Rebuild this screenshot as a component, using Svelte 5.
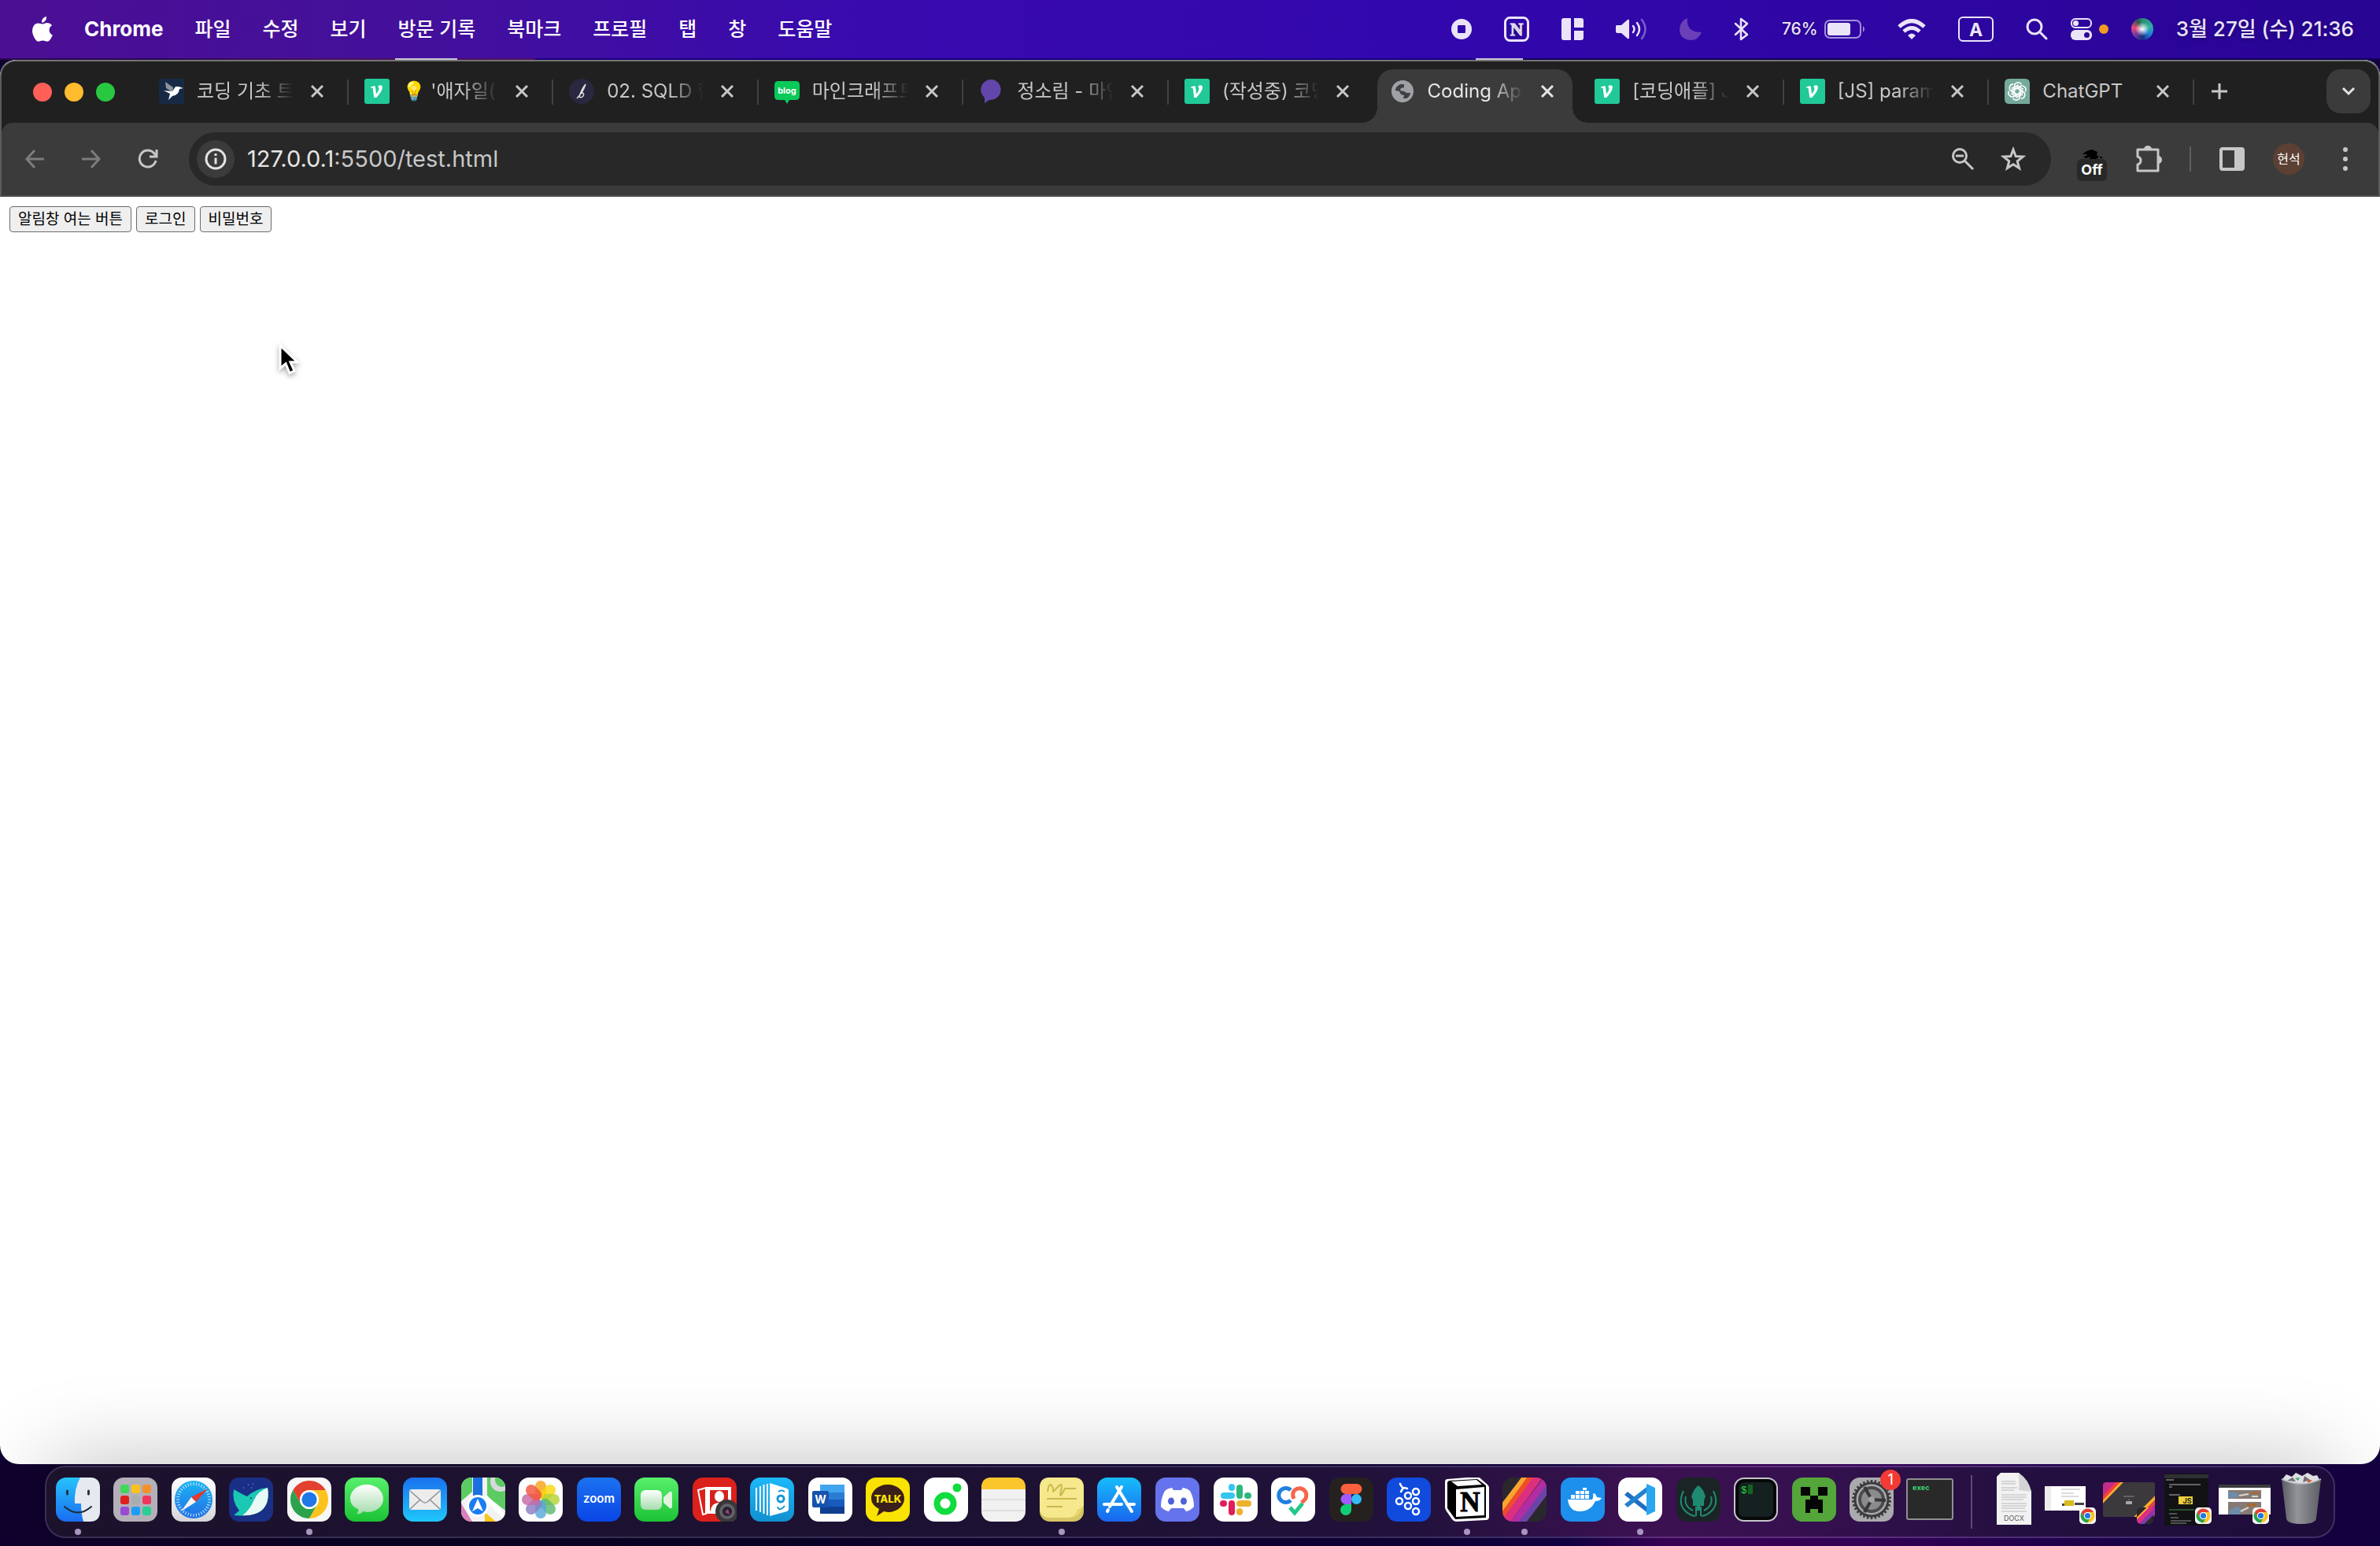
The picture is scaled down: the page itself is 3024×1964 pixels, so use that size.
<script lang="ts">
  interface Tab {
    title: string;
    icon: string;
    active?: boolean;
    divider?: boolean;
    short?: boolean;
  }

  const menus = ['파일', '수정', '보기', '방문 기록', '북마크', '프로필', '탭', '창', '도움말'];

  const tabs: Tab[] = [
    { title: '코딩 기초 트', icon: 'bird', divider: true },
    { title: "💡 '애자일(", icon: 'velog', divider: true },
    { title: '02. SQLD 합', icon: 'script', divider: true },
    { title: '마인크래프트', icon: 'blog', divider: true },
    { title: '정소림 - 마인', icon: 'bubble', divider: true },
    { title: '(작성중) 코딩', icon: 'velog' },
    { title: 'Coding Ap', icon: 'globe', active: true },
    { title: '[코딩애플] J', icon: 'velog', divider: true },
    { title: '[JS] param', icon: 'velog', divider: true },
    { title: 'ChatGPT', icon: 'gpt', divider: true, short: true },
  ];

  const apps = [
    'Finder', 'Launchpad', 'Safari', 'Whale', 'Chrome', 'Messages', 'Mail', 'Maps', 'Photos', 'Zoom',
    'FaceTime', 'Photo Booth', 'Books', 'Word', 'KakaoTalk', 'Melon', 'Notes', 'Stickies', 'App Store',
    'Discord', 'Slack', 'Care', 'Figma', 'Grape', 'Notion', 'Stripes', 'Docker', 'Code', 'GitKraken',
    'Terminal', 'Minecraft', 'Settings', 'exec',
  ];
  const running = ['Finder', 'Chrome', 'Stickies', 'Notion', 'Stripes', 'Code'];
  const files = ['Document', 'Window 1', 'Window 2', 'Window 3', 'Window 4', 'Trash'];

  const petals = ['#f6a21b', '#f9d80f', '#b5d334', '#5bb974', '#5aa7d8', '#8a7cc2', '#c66aa6', '#f2553d'];
  const padColors = ['#3fd858', '#fbc21d', '#f5912b', '#e0201c', '#a8abb0', '#f0365c', '#9a4bd2', '#1f9df5', '#27cf93'];
  const ticks = Array.from({ length: 36 }, (_, i) => i * 10);
  const teeth = Array.from({ length: 30 }, (_, i) => i * 12);
</script>

{#snippet chromeBall()}
  <svg viewBox="0 0 56 56" width="56" height="56">
    <rect width="56" height="56" rx="13" fill="#f7f7f7" />
    <g transform="translate(28 28) scale(1.2) translate(-24 -24)">
      <path d="M24 14H41.3A20 20 0 0 0 6.7 14L15.34 29A10 10 0 0 1 24 14z" fill="#e3402f" />
      <path d="M6.7 14A20 20 0 0 0 24 44L32.66 29A10 10 0 0 1 15.34 29z" fill="#2ba24b" />
      <path d="M24 44A20 20 0 0 0 41.3 14H24A10 10 0 0 1 32.66 29z" fill="#fcc31e" />
      <circle cx="24" cy="24" r="10" fill="#fff" />
      <circle cx="24" cy="24" r="8" fill="#1f77e8" />
    </g>
  </svg>
{/snippet}

{#snippet favicon(name: string)}
  {#if name === 'velog'}
    <svg viewBox="0 0 32 32" width="32" height="32">
      <rect width="32" height="32" rx="3" fill="#20c997" />
      <path d="M8 10.500l5-1.500q1 .5 1.300 4l.6 6.500q3.800-4.500 3.500-7.500-.3-1.500-1.300-1.800.5-2 3-2 2.800 0 2.800 2.800 0 4.500-7.600 13h-3.100L10.700 12.500q-.3-1-1-1H8z" fill="#fff" />
    </svg>
  {:else if name === 'bird'}
    <svg viewBox="0 0 32 32" width="32" height="32">
      <rect width="32" height="32" rx="4" fill="#172a45" />
      <path d="M8 4l10 7-1 6-8-5z" fill="#8d949e" />
      <path d="M6 15l11 1 4-6h4l6 2-5 1q-1 8-9 9l-5 5 2-8z" fill="#fff" />
    </svg>
  {:else if name === 'script'}
    <svg viewBox="0 0 32 32" width="32" height="32">
      <circle cx="16" cy="16" r="16" fill="#2a2740" />
      <path d="M10 25q8-8 11-18-5 6-8 16 2 2 5-1 2-4-2-4" fill="none" stroke="#ddd" stroke-width="1.500" />
    </svg>
  {:else if name === 'blog'}
    <svg viewBox="0 0 32 32" width="32" height="32">
      <path d="M5 3h22q5 0 5 5v14q0 5-5 5h-8l-3 5-3-5H5q-5 0-5-5V8q0-5 5-5z" fill="#09c958" />
      <text x="16" y="19" font-family="Inter, sans-serif" font-weight="700" font-size="11" text-anchor="middle" fill="#fff">blog</text>
    </svg>
  {:else if name === 'bubble'}
    <svg viewBox="0 0 32 32" width="32" height="32">
      <path d="M16 1a13 13 0 1 1-3 26l-6 4v-7A13 13 0 0 1 16 1z" fill="#6246ac" />
    </svg>
  {:else if name === 'globe'}
    <svg viewBox="0 0 32 32" width="32" height="32">
      <circle cx="16" cy="16" r="14" fill="#9ea0a5" />
      <path d="M13 7h6l-1 4-4 1-1 3 5 1 3 2h5q0 5-4 7h-5l1-4-4-1-2-4-5-1q0-5 6-8z" fill="#3c4043" />
      <path d="M18 7q4 0 7 4-1 4-5 3l-2-3z" fill="#9ea0a5" />
      <circle cx="16" cy="16" r="12" fill="none" stroke="#9ea0a5" stroke-width="3" />
    </svg>
  {:else}
    <svg viewBox="0 0 32 32" width="32" height="32">
      <path d="M6 0h20q6 0 6 6v26H6q-6 0-6-6V6q0-6 6-6z" fill="#75a99c" />
      <g fill="none" stroke="#fff" stroke-width="1.600" stroke-linejoin="round">
        {#each [0, 60, 120, 180, 240, 300] as turn}
          <path transform="rotate({turn} 16 16)" d="M12.500 18V9.500a4.800 4.800 0 0 1 9-2.200M12.500 13.500l5.500-3.500 6 3.400" />
        {/each}
      </g>
    </svg>
  {/if}
{/snippet}

{#snippet appArt(name: string)}
  {#if name === 'Finder'}
    <svg viewBox="0 0 56 56" width="56" height="56">
      <rect width="56" height="56" rx="13" fill="url(#g-finder)" />
      <path d="M31 0h12q13 0 13 13v30q0 13-13 13h-8q-3-10-3-23h-8Q23 14 31 0z" fill="#e6e9ef" />
      <path d="M14.500 17v4M41.500 17v4" stroke="#26333f" stroke-width="3" stroke-linecap="round" />
      <path d="M11 37q17 15 34 0" fill="none" stroke="#1c2b3b" stroke-width="2" stroke-linecap="round" />
    </svg>
  {:else if name === 'Launchpad'}
    <svg viewBox="0 0 56 56" width="56" height="56">
      <rect width="56" height="56" rx="13" fill="#b3b0ba" />
      {#each padColors as color, i}
        <rect x={9 + (i % 3) * 14} y={9 + Math.floor(i / 3) * 14} width="11" height="11" rx="3" fill={color} />
      {/each}
    </svg>
  {:else if name === 'Safari'}
    <svg viewBox="0 0 56 56" width="56" height="56">
      <rect width="56" height="56" rx="13" fill="url(#g-white)" />
      <circle cx="28" cy="28" r="24" fill="url(#g-blue)" />
      {#each ticks as turn}
        <path transform="rotate({turn} 28 28)" d="M28 6v4" stroke="#cfe9ff" />
      {/each}
      <path d="M46 14L31 31l-6-6z" fill="#e8372c" />
      <path d="M12 43l13-18 6 6z" fill="#f3f3f3" />
    </svg>
  {:else if name === 'Whale'}
    <svg viewBox="0 0 56 56" width="56" height="56">
      <rect width="56" height="56" rx="13" fill="#1a2f86" />
      <path d="M6 15q10 6 17 9Q34 14 49 13q4 20-9 30-12 7-34 5l7-6Q3 30 6 15z" fill="#1ac8b4" />
      <path d="M49 13q3 20-8 29-9 7-24 6Q26 42 32 28q5-11 17-15z" fill="#e9faf6" />
      <circle cx="28" cy="26" r="1" fill="#123" />
      <path d="M18 13h1M24 9h1M30 8h1M28 13h1" stroke="#8db4ff" />
    </svg>
  {:else if name === 'Chrome'}
    {@render chromeBall()}
  {:else if name === 'Messages'}
    <svg viewBox="0 0 56 56" width="56" height="56">
      <rect width="56" height="56" rx="13" fill="url(#g-green)" />
      <path d="M28 9c12 0 21 8 21 18s-9 17-21 17l-5-1q-3 4-8 3 3-2 2-6Q7 36 7 27C7 17 16 9 28 9z" fill="url(#g-mint)" />
    </svg>
  {:else if name === 'Mail'}
    <svg viewBox="0 0 56 56" width="56" height="56">
      <rect width="56" height="56" rx="13" fill="url(#g-mail)" />
      <rect x="8" y="15" width="40" height="26" rx="3" fill="#ececec" />
      <path d="M9 17l16 14q3 2 6 0l16-14M9 40l13-12M47 40L34 28" fill="none" stroke="#8b8f94" stroke-width="1.500" />
    </svg>
  {:else if name === 'Maps'}
    <svg viewBox="0 0 56 56" width="56" height="56">
      <g clip-path="url(#tile)">
        <rect width="56" height="56" fill="#f2f2f2" />
        <path d="M0 0h14v18L0 30zM33 0h23v42L33 24z" fill="#5ccb61" />
        <path d="M0 33l14 23H0z" fill="#dc80bb" />
        <path d="M30 56V44l14 12z" fill="#fbc51b" />
        <circle cx="50" cy="5" r="13" fill="#d8d8dc" />
        <circle cx="52" cy="3" r="9" fill="#5ccb61" />
        <path d="M15 0h12v30H15z" fill="#1d6fe0" />
        <path d="M30 24l26 27" stroke="#fff" stroke-width="6" />
        <circle cx="21" cy="36" r="14" fill="#fff" />
        <circle cx="21" cy="36" r="11" fill="#1a7cf2" />
        <path d="M21 27l7 16-7-4-7 4z" fill="#fff" />
      </g>
    </svg>
  {:else if name === 'Photos'}
    <svg viewBox="0 0 56 56" width="56" height="56">
      <rect width="56" height="56" rx="13" fill="#fdfdfd" />
      {#each petals as color, i}
        <rect x="21" y="4" width="14" height="23" rx="7" fill={color} opacity="0.820" transform="rotate({i * 45} 28 28)" />
      {/each}
    </svg>
  {:else if name === 'Zoom'}
    <svg viewBox="0 0 56 56" width="56" height="56">
      <rect width="56" height="56" rx="13" fill="url(#g-zoom)" />
      <text x="28" y="32" font-family="Inter, sans-serif" font-weight="600" font-size="15" text-anchor="middle" fill="#fff">zoom</text>
    </svg>
  {:else if name === 'FaceTime'}
    <svg viewBox="0 0 56 56" width="56" height="56">
      <rect width="56" height="56" rx="13" fill="url(#g-green)" />
      <rect x="8" y="16" width="27" height="25" rx="6" fill="url(#g-mint)" />
      <path d="M37 25l8-7q3-1 3 2v17q0 3-3 2l-8-7z" fill="#dff3df" />
    </svg>
  {:else if name === 'Photo Booth'}
    <svg viewBox="0 0 56 56" width="56" height="56">
      <rect width="56" height="56" rx="13" fill="#dc201c" />
      <path d="M7 16l10-3v33l-4 1z" fill="none" stroke="#fff" stroke-width="2" />
      <path d="M18 12h31v34H18z" fill="#fff" />
      <path d="M22 16h23v26H22z" fill="#d6221e" />
      <ellipse cx="34" cy="24" rx="6" ry="7" fill="#fff" />
      <path d="M23 42q1-10 11-10t11 10z" fill="#fff" />
      <circle cx="44" cy="43" r="15" fill="#38383b" />
      <circle cx="44" cy="43" r="10" fill="#606066" />
      <circle cx="44" cy="43" r="6" fill="#25222d" />
      <path d="M41 44l4-4 2 7z" fill="#a2417e" />
    </svg>
  {:else if name === 'Books'}
    <svg viewBox="0 0 56 56" width="56" height="56">
      <rect width="56" height="56" rx="13" fill="url(#g-sky)" />
      <path d="M25 7l22 7q2 1 2 3v23q0 2-2 3l-22 6z" fill="#fff" />
      <path d="M8 13v29M13 11v33M17.500 9v37M22 8v40" stroke="#fff" stroke-width="2" />
      <circle cx="39" cy="27" r="4" fill="none" stroke="#1597d8" stroke-width="3" />
      <path d="M36 18q4-3 8 0M35 37q1 4 4 3t5-4" fill="none" stroke="#1597d8" stroke-width="2" />
    </svg>
  {:else if name === 'Word'}
    <svg viewBox="0 0 56 56" width="56" height="56">
      <rect width="56" height="56" rx="13" fill="#fff" />
      <path d="M15 9h31v10H15z" fill="#41a5ee" />
      <path d="M15 19h31v9H15z" fill="#2b7cd3" />
      <path d="M15 28h31v9H15z" fill="#185abd" />
      <path d="M15 37h31v9H15z" fill="#103f91" />
      <rect x="5" y="17" width="21" height="21" rx="2" fill="#1553ad" />
      <text x="15.500" y="33" font-family="Inter, sans-serif" font-weight="700" font-size="14" text-anchor="middle" fill="#fff">W</text>
    </svg>
  {:else if name === 'KakaoTalk'}
    <svg viewBox="0 0 56 56" width="56" height="56">
      <rect width="56" height="56" rx="13" fill="#fae300" />
      <path d="M28 9c12 0 21 8 21 17.500S40 44 28 44l-5-1-9 6 3-9Q7 35 7 26.500C7 17 16 9 28 9z" fill="#3b1f1b" />
      <text x="28" y="32" font-family="Inter, sans-serif" font-weight="800" font-size="13" text-anchor="middle" fill="#ffe500">TALK</text>
    </svg>
  {:else if name === 'Melon'}
    <svg viewBox="0 0 56 56" width="56" height="56">
      <rect width="56" height="56" rx="14" fill="#fff" />
      <circle cx="27" cy="33" r="10.500" fill="none" stroke="#10dc3d" stroke-width="8" />
      <circle cx="42" cy="13" r="5.500" fill="#10dc3d" />
    </svg>
  {:else if name === 'Notes'}
    <svg viewBox="0 0 56 56" width="56" height="56">
      <rect width="56" height="56" rx="13" fill="#f1f1f1" />
      <path d="M13 0h30q13 0 13 13v2H0v-2Q0 0 13 0z" fill="#fbc52c" />
      <path d="M0 28h56M0 42h56" stroke="#cfcfcf" />
    </svg>
  {:else if name === 'Stickies'}
    <svg viewBox="0 0 56 56" width="56" height="56">
      <rect width="56" height="56" rx="13" fill="#d6c664" />
      <path d="M13 0h30q13 0 13 13v22Q50 50 38 51H13Q0 51 0 38V13Q0 0 13 0z" fill="#f6e88c" />
      <path d="M10 18q2-12 5-8t2 7 6-5 4 5 5-3h14M9 27h38M9 37h20" fill="none" stroke="#cbb84e" stroke-width="2" />
      <path d="M56 35q-7 14-18 16 9-3 10-10 4-1 8-6z" fill="#e2cf66" />
    </svg>
  {:else if name === 'App Store'}
    <svg viewBox="0 0 56 56" width="56" height="56">
      <rect width="56" height="56" rx="13" fill="url(#g-store)" />
      <path d="M31 12L16 37M25 12l19 31M9 34h22M38 34h9M14 41l-1 2" stroke="#fff" stroke-width="4" stroke-linecap="round" />
    </svg>
  {:else if name === 'Discord'}
    <svg viewBox="0 0 56 56" width="56" height="56">
      <rect width="56" height="56" rx="13" fill="#6573ec" />
      <path d="M21 13l2 3h10l2-3q6 1 9 4 5 9 5 20-4 5-10 6l-3-4H20l-3 4q-6-1-10-6 0-11 5-20 3-3 9-4z" fill="#fff" />
      <ellipse cx="20" cy="30" rx="4" ry="4.500" fill="#5060d8" />
      <ellipse cx="36" cy="30" rx="4" ry="4.500" fill="#5060d8" />
    </svg>
  {:else if name === 'Slack'}
    <svg viewBox="0 0 56 56" width="56" height="56">
      <rect width="56" height="56" rx="13" fill="#fff" />
      <g stroke-width="8" stroke-linecap="round">
        <path d="M13 23h10M23 12v1" stroke="#36c5f0" />
        <path d="M33 13v10M43 23h1" stroke="#2eb67d" />
        <path d="M33 33h11M33 43v1" stroke="#ecb22e" />
        <path d="M23 33v11M13 33h-1" stroke="#e01e5a" />
      </g>
    </svg>
  {:else if name === 'Care'}
    <svg viewBox="0 0 56 56" width="56" height="56">
      <rect width="56" height="56" rx="13" fill="#fff" />
      <g fill="none" stroke-width="5">
        <path d="M25 16a9 9 0 1 0 0 13" stroke="#2180e0" />
        <path d="M29 27q-3-7 1-11a8.500 8.500 0 1 1 12 13l-3 3" stroke="#f7654a" />
        <path d="M24 38l6 7 10-12" stroke="#24c78a" />
      </g>
    </svg>
  {:else if name === 'Figma'}
    <svg viewBox="0 0 56 56" width="56" height="56">
      <rect width="56" height="56" rx="13" fill="#24211f" />
      <path d="M28 8h-7a6.500 6.500 0 0 0 0 13h7zM28 8h7a6.500 6.500 0 0 1 0 13h-7z" fill="#f9603d" />
      <path d="M28 21h-7a6.500 6.500 0 0 0 0 13h7z" fill="#a259ff" />
      <circle cx="34.500" cy="27.500" r="6.500" fill="#35bdf8" />
      <path d="M28 34h-7a7 7 0 1 0 7 7z" fill="#0fcf74" />
    </svg>
  {:else if name === 'Grape'}
    <svg viewBox="0 0 56 56" width="56" height="56">
      <rect width="56" height="56" rx="13" fill="#104bdd" />
      <g fill="none" stroke="#fff" stroke-width="2.500">
        <circle cx="37" cy="18" r="4" /><circle cx="27" cy="23" r="4" />
        <circle cx="16" cy="30" r="4" /><circle cx="37" cy="30" r="4" />
        <circle cx="27" cy="36" r="4" /><circle cx="37" cy="43" r="4" />
        <path d="M17 8q2 5 4 5t5 1M21 13l-3 5" stroke-linecap="round" />
      </g>
    </svg>
  {:else if name === 'Notion'}
    <svg viewBox="0 0 56 56" width="56" height="56">
      <path d="M3 2l37-3q3 0 6 3l8 7q2 2 2 4v37q0 4-4 4l-38 2q-3 0-5-3L2 43q-2-3-2-5V6q0-4 3-4z" fill="#fff" />
      <path d="M5 4l36-2 11 8v41l-39 2L3 39V6z" fill="#000" />
      <path d="M14 15l36-3v36l-36 2zM8 5l32-2 7 6-31 2z" fill="#fff" />
      <text x="32" y="43" font-family="Liberation Serif, serif" font-weight="700" font-size="35" text-anchor="middle" fill="#000" stroke="#000">N</text>
    </svg>
  {:else if name === 'Stripes'}
    <svg viewBox="0 0 56 56" width="56" height="56">
      <g clip-path="url(#tile)">
        <rect width="56" height="56" fill="#2b282d" />
        <path d="M-14 56L30-2" stroke="#f9a52f" stroke-width="7" />
        <path d="M-8 60L37-2" stroke="#ef4c2a" stroke-width="7" />
        <path d="M-2 64L48-4" stroke="#dc2f80" stroke-width="10" />
        <path d="M7 68L60-2" stroke="#b42ca4" stroke-width="10" />
        <path d="M16 69L66 3" stroke="#6c44a8" stroke-width="8" />
      </g>
    </svg>
  {:else if name === 'Docker'}
    <svg viewBox="0 0 56 56" width="56" height="56">
      <rect width="56" height="56" rx="13" fill="#1d90ee" />
      <path d="M9 28h31q2-3 1-8l3 1 2 4 6 1q-2 4-8 4Q38 43 24 43 11 43 9 28z" fill="#fff" />
      <path d="M13 22h5v5h-5zM19 22h5v5h-5zM25 22h5v5h-5zM31 22h5v5h-5zM19 17h5v4h-5zM25 17h5v4h-5zM28 13h5v3h-5zM31 17h5v4h-5z" fill="#fff" />
    </svg>
  {:else if name === 'Code'}
    <svg viewBox="0 0 56 56" width="56" height="56">
      <rect width="56" height="56" rx="13" fill="#fff" />
      <path d="M8 22l4-4 28 22v7z" fill="#1f6fc0" />
      <path d="M8 34l4 4 28-22V9z" fill="#2382cf" />
      <path d="M36 8l11 5v30l-11 5z" fill="#2ba5ef" />
    </svg>
  {:else if name === 'GitKraken'}
    <svg viewBox="0 0 56 56" width="56" height="56">
      <rect width="56" height="56" rx="13" fill="#1b2424" />
      <path d="M28 10q6 4 9 14l-2 5v7h-5v6h-4v-6h-5v-7l-2-5q3-10 9-14z" fill="#1f8a72" />
      <path d="M9 17Q2 32 10 41q6 7 14 8M47 17q7 15-1 24-6 7-14 8M12 24q-3 12 9 18M44 24q3 12-9 18M25 37v12M31 37v12" fill="none" stroke="#1f8a72" stroke-width="2" />
    </svg>
  {:else if name === 'Terminal'}
    <svg viewBox="0 0 56 56" width="56" height="56">
      <rect width="56" height="56" rx="13" fill="#c5c5cc" />
      <rect x="2" y="2" width="52" height="52" rx="11" fill="#060808" />
      <rect x="6" y="6" width="44" height="44" rx="7" fill="#152020" />
      <text x="9" y="20" font-family="Liberation Mono, monospace" font-size="13" fill="#27d645">$</text>
      <rect x="18" y="9" width="6" height="12" fill="#12651f" />
    </svg>
  {:else if name === 'Minecraft'}
    <svg viewBox="0 0 56 56" width="56" height="56">
      <rect width="56" height="56" rx="13" fill="#54a53a" />
      <path d="M11 12h12v11h10V12h12v11H33v5h6v17h-6v-5H23v5h-6V28h6v-5H11z" fill="#050505" />
    </svg>
  {:else if name === 'Settings'}
    <svg viewBox="0 0 56 56" width="56" height="56">
      <rect width="56" height="56" rx="13" fill="#aaaaae" />
      {#each teeth as turn}
        <path transform="rotate({turn} 28 28)" d="M28 3v5" stroke="#3b3b3d" stroke-width="2.500" />
      {/each}
      <circle cx="28" cy="28" r="21" fill="none" stroke="#3b3b3d" stroke-width="3" />
      <circle cx="28" cy="28" r="15" fill="#8b8b8f" stroke="#4a4a4c" stroke-width="4" />
      <path d="M28 28l18 1M28 28L19 12M28 28l-9 16" stroke="#37373a" stroke-width="4" />
      <circle cx="28" cy="28" r="4" fill="#a0a0a4" />
    </svg>
    <span class="badge">1</span>
  {:else}
    <svg viewBox="0 0 60 56" width="60" height="56">
      <rect x="1" y="2" width="58" height="51" rx="2" fill="#292929" stroke="#8e8e92" stroke-width="2" />
      <text x="8" y="16" font-family="Liberation Mono, monospace" font-weight="700" font-size="9" fill="#3be07a">exec</text>
    </svg>
  {/if}
{/snippet}

{#snippet fileArt(name: string)}
  {#if name === 'Document'}
    <svg viewBox="0 0 66 68" width="66" height="68">
      <path d="M17 1h23l16 23v43H12V6z" fill="#f2f2f2" />
      <path d="M40 1q1 14 0 22l16 2q-3-15-16-24z" fill="#d4d4d6" />
      <path d="M18 12h18M18 15h18M18 20h20M18 23h16M18 29h32M18 32h32M18 35h28M18 40h32M18 43h32M18 46h30M18 50h32" stroke="#b9b9bc" />
      <text x="34" y="62" font-family="Inter, sans-serif" font-size="9" text-anchor="middle" fill="#5e5e60">DOCX</text>
    </svg>
  {:else if name === 'Window 1'}
    <svg viewBox="0 0 66 68" width="66" height="68">
      <rect y="18" width="52" height="31" fill="#fff" />
      <path d="M0 18h8v31H0z" fill="#ececef" />
      <path d="M21 22h24M21 27h16M21 31h22" stroke="#b7b7bd" />
      <path d="M25 36h12v7H25z" fill="#d8ba20" />
      <path d="M22 40h3v3h-3zM38 39h12v3H38z" fill="#444" />
    </svg>
  {:else if name === 'Window 2'}
    <svg viewBox="0 0 66 68" width="66" height="68">
      <clipPath id="wide"><rect y="13" width="66" height="44" rx="2" /></clipPath>
      <g clip-path="url(#wide)">
        <rect y="13" width="66" height="44" fill="#3c393d" />
        <path d="M-8 34L17 9" stroke="#c52b8c" stroke-width="14" />
        <path d="M-5 42L26 10M38 61l32-32" stroke="#ffa92e" stroke-width="4" />
        <path d="M-5 38L22 10M44 61l30-30" stroke="#ef3f3c" stroke-width="4" />
        <path d="M50 64l24-24" stroke="#b42ca4" stroke-width="10" />
      </g>
      <path d="M26 31h14M32 35h2" stroke="#8d898f" />
      <rect x="29" y="37" width="8" height="4" rx="1" fill="#aaa7ac" />
    </svg>
  {:else if name === 'Window 3'}
    <svg viewBox="0 0 66 68" width="66" height="68">
      <rect x="5" y="2" width="56" height="66" fill="#121214" />
      <path d="M5 3h56v5H5z" fill="#2f3032" />
      <path d="M7 10h10M11 16h40M11 19h4M11 29h14" stroke="#b3b3b5" stroke-width="1" />
      <rect x="23" y="31" width="18" height="10" fill="#f0cf3a" />
      <text x="34" y="40" font-family="Inter, sans-serif" font-weight="700" font-size="9" text-anchor="middle" fill="#262626">JS</text>
      <path d="M11 48h32" stroke="#418c4b" />
      <path d="M11 53h10M13 58h10M13 62h26M13 65h20" stroke="#8f8f92" />
    </svg>
  {:else if name === 'Window 4'}
    <svg viewBox="0 0 66 68" width="66" height="68">
      <rect y="16" width="66" height="38" fill="#fff" />
      <path d="M0 16h66v4H0z" fill="#3c3c3e" />
      <path d="M12 23h42v11H12zM12 38h42v16H12z" fill="#857b74" />
      <path d="M12 25l10 1 6 4-8 3h-8zM14 48l10-4 8 5-7 5H14z" fill="#6f8daa" />
      <path d="M41 25h11v3H41zM36 40h12v4H36z" fill="#a66a3c" />
      <path d="M26 30l12-2M28 50l10-5M42 31h8" stroke="#ded6cc" stroke-width="2" />
    </svg>
  {:else}
    <svg viewBox="0 0 66 68" width="66" height="68">
      <path d="M8 9l5-6 7 3 5-5 8 4 7-4 7 4 5-1 4 7-5 6H13z" fill="#dedfe2" />
      <path d="M14 11l7-4 4 5zM36 5l7 5-9 3z" fill="#6c6e74" />
      <path d="M24 8l6-1-2 4z" fill="#3faa64" />
      <path d="M40 9l6 2-6 3z" fill="#c85b33" />
      <path d="M7 9q25 12 50 0l-6 50q-1 7-19 7t-19-7z" fill="url(#g-bin)" />
      <path d="M7 9q25 12 50 0" fill="none" stroke="#b9b9c0" stroke-width="1.500" />
    </svg>
  {/if}
  {#if name === 'Window 2'}
    <span class="mini stripes"></span>
  {:else if name.startsWith('Window')}
    <span class="mini">{@render chromeBall()}</span>
  {/if}
{/snippet}

<svg class="defs" width="0" height="0" aria-hidden="true">
  <defs>
    <clipPath id="tile"><rect width="56" height="56" rx="13" /></clipPath>
    <linearGradient id="g-finder" x2="0" y2="1"><stop stop-color="#26c3fb" /><stop offset="1" stop-color="#1a6df0" /></linearGradient>
    <linearGradient id="g-white" x2="0" y2="1"><stop stop-color="#fff" /><stop offset="1" stop-color="#d6d6d8" /></linearGradient>
    <linearGradient id="g-blue" x2="0" y2="1"><stop stop-color="#1db4f3" /><stop offset="1" stop-color="#2070e4" /></linearGradient>
    <linearGradient id="g-green" x2="0" y2="1"><stop stop-color="#57f06c" /><stop offset="1" stop-color="#1cc234" /></linearGradient>
    <linearGradient id="g-mint" x2="0" y2="1"><stop stop-color="#fff" /><stop offset="1" stop-color="#a5dcab" /></linearGradient>
    <linearGradient id="g-mail" x2="0" y2="1"><stop stop-color="#1a70ee" /><stop offset="1" stop-color="#1fc8fb" /></linearGradient>
    <linearGradient id="g-zoom" x2="0" y2="1"><stop stop-color="#1b72f0" /><stop offset="1" stop-color="#0a45e6" /></linearGradient>
    <linearGradient id="g-sky" x2="0" y2="1"><stop stop-color="#1cb8fb" /><stop offset="1" stop-color="#1290cf" /></linearGradient>
    <linearGradient id="g-store" x2="0" y2="1"><stop stop-color="#16bdfb" /><stop offset="1" stop-color="#1a66ee" /></linearGradient>
    <linearGradient id="g-bin" x2="1" y2="0"><stop stop-color="#5c5c63" /><stop offset="0.400" stop-color="#93939a" /><stop offset="1" stop-color="#5d5d64" /></linearGradient>
  </defs>
</svg>

<div class="desktop">
  <header class="menubar">
    <nav class="menus">
      <button class="apple" aria-label="Apple">
        <svg viewBox="0 0 26 32" width="26" height="32" fill="#fff">
          <path d="M18 0q.6 3.200-1.600 5.600T12 7.800q-.5-3 1.500-5.300T18 0z" />
          <path d="M13.300 9.500q1 0 3-.9t4.200-.3q3 .4 4.600 2.900-3.700 2.300-3.500 6.300t4.200 6q-1 3-3 5.700t-4 2.600q-1.200 0-2.700-.7t-2.900-.7q-1.300 0-2.700.7t-2.700.7Q5.600 32 3.300 28.300T.2 20.500q-.6-5 1.300-8.300T7 8.500q1.600 0 3.400.6t2.900.4z" />
        </svg>
      </button>
      <button class="app-name">Chrome</button>
      {#each menus as menu (menu)}
        <button>{menu}</button>
      {/each}
    </nav>
    <div class="status">
      <svg viewBox="0 0 26 26" width="26" height="26"><path d="M13 0a13 13 0 1 1 0 26 13 13 0 0 1 0-26zM9 8q-1 0-1 1v8q0 1 1 1h8q1 0 1-1V9q0-1-1-1z" fill="#ebe4f9" fill-rule="evenodd" /></svg>
      <svg viewBox="0 0 32 32" width="32" height="32">
        <rect x="1.500" y="1.500" width="29" height="29" rx="6" fill="none" stroke="#ebe4f9" stroke-width="3" />
        <text x="16" y="24" font-family="Liberation Serif, serif" font-weight="700" font-size="23" text-anchor="middle" fill="#ebe4f9" stroke="#ebe4f9">N</text>
      </svg>
      <svg viewBox="0 0 28 28" width="28" height="28" fill="#ebe4f9"><path d="M3 0h9v28H3q-3 0-3-3V3q0-3 3-3zM16 0h9q3 0 3 3v9H16zM16 16h12v9q0 3-3 3h-9z" /></svg>
      <svg viewBox="0 0 40 28" width="40" height="28" fill="none" stroke="#ebe4f9" stroke-width="2.500" stroke-linecap="round">
        <path d="M1 9h6l8-7q2-1 2 1v22q0 2-2 1l-8-7H2q-2 0-2-2v-6q0-2 1-2z" fill="#ebe4f9" stroke="none" />
        <path d="M22 10q3 4 0 8M27 6q6 8 0 16" />
        <path d="M33 2q9 12 0 24" opacity="0.400" />
      </svg>
      <svg viewBox="0 0 28 28" width="28" height="28"><path d="M10 0Q8 18 28 18 24 28 14 28 0 27 0 14 1 3 10 0z" fill="#6b3fb8" /></svg>
      <svg viewBox="0 0 20 30" width="20" height="30" fill="none" stroke="#ebe4f9" stroke-width="2.500" stroke-linejoin="round" stroke-linecap="round"><path d="M2 8l15 14-8 6V2l8 6L2 22" /></svg>
      <div class="battery">
        <span>76%</span>
        <svg viewBox="0 0 52 24" width="52" height="24">
          <rect x="1" y="1" width="45" height="22" rx="6" fill="none" stroke="#a58fdc" stroke-width="2" />
          <rect x="4" y="4" width="29" height="16" rx="3" fill="#ebe4f9" />
          <path d="M49 8q4 4 0 8z" fill="#a58fdc" />
        </svg>
      </div>
      <svg viewBox="0 0 36 26" width="36" height="26" fill="none" stroke="#ebe4f9" stroke-width="5">
        <path d="M2 10Q18-5 34 10M8 16q10-9 20 0" />
        <path d="M18 26l-5-5q5-5 10 0z" fill="#ebe4f9" stroke="none" />
      </svg>
      <svg viewBox="0 0 45 32" width="45" height="32">
        <rect x="1" y="1" width="43" height="30" rx="5" fill="none" stroke="#ebe4f9" stroke-width="2" />
        <text x="22.500" y="25" font-family="Inter, sans-serif" font-weight="700" font-size="23" text-anchor="middle" fill="#ebe4f9">A</text>
      </svg>
      <svg viewBox="0 0 28 28" width="28" height="28" fill="none" stroke="#ebe4f9" stroke-width="3" stroke-linecap="round"><circle cx="11" cy="11" r="9" /><path d="M18 18l8 8" /></svg>
    </div>
    <div class="status late">
      <svg viewBox="0 0 48 28" width="48" height="28">
        <rect x="1" y="1" width="25" height="11" rx="5" fill="none" stroke="#ebe4f9" stroke-width="2" />
        <circle cx="6.500" cy="6.500" r="3.500" fill="#ebe4f9" />
        <rect y="15" width="27" height="13" rx="6" fill="#ebe4f9" />
        <circle cx="20.500" cy="21.500" r="3.500" fill="#2b0596" />
        <circle cx="42" cy="14" r="6" fill="#f39b22" />
      </svg>
      <span class="siri"></span>
      <time>3월 27일 (수) 21:36</time>
    </div>
  </header>
  <div class="sliver"></div>

  <main class="window">
    <div class="chrome">
      <div class="strip">
        <div class="lights">
          <button class="light red" aria-label="닫기"></button>
          <button class="light yellow" aria-label="최소화"></button>
          <button class="light green" aria-label="확대"></button>
        </div>
        <div class="tabs">
          {#each tabs as tab}
            <div class="tab" class:active={tab.active} class:divider={tab.divider}>
              {@render favicon(tab.icon)}
              <button class="title" class:faded={!tab.short}>{tab.title}</button>
              <button class="close" aria-label="탭 닫기">
                <svg viewBox="0 0 16 16" width="16" height="16" fill="none" stroke="currentColor" stroke-width="3"><path d="M1 1l14 14M15 1L1 15" /></svg>
              </button>
            </div>
          {/each}
        </div>
        <button class="new-tab" aria-label="새 탭">
          <svg viewBox="0 0 20 20" width="20" height="20" fill="none" stroke="#c7c7c7" stroke-width="3"><path d="M10 0v20M0 10h20" /></svg>
        </button>
        <button class="tab-search" aria-label="탭 검색">
          <svg viewBox="0 0 18 12" width="18" height="12" fill="none" stroke="#e3e3e3" stroke-width="3"><path d="M2 2l7 7 7-7" /></svg>
        </button>
      </div>

      <div class="toolbar">
        <button class="tool dim" aria-label="뒤로">
          <svg viewBox="0 0 24 24" width="24" height="24" fill="none" stroke="currentColor" stroke-width="3"><path d="M24 12H2M12 1L2 12l10 11" /></svg>
        </button>
        <button class="tool dim" aria-label="앞으로">
          <svg viewBox="0 0 24 24" width="24" height="24" fill="none" stroke="currentColor" stroke-width="3"><path d="M0 12h22M12 1l10 11-10 11" /></svg>
        </button>
        <button class="tool" aria-label="새로고침">
          <svg viewBox="0 0 26 26" width="26" height="26" fill="none" stroke="currentColor" stroke-width="3"><path d="M23 15a10.500 10.500 0 1 1-2-9l3 3M24 1v9h-9" /></svg>
        </button>
        <div class="omnibox">
          <button class="site" aria-label="사이트 정보">
            <svg viewBox="0 0 28 28" width="28" height="28" fill="none" stroke="#e3e3e3" stroke-width="3"><circle cx="14" cy="14" r="12" /><path d="M14 12.500v8M14 7v3" /></svg>
          </button>
          <a class="url" href="http://127.0.0.1:5500/test.html"><b>127.0.0.1</b>:5500/test.html</a>
          <button class="inner" aria-label="확대/축소">
            <svg viewBox="0 0 30 30" width="30" height="30" fill="none" stroke="currentColor" stroke-width="3"><circle cx="11" cy="11" r="8.500" /><path d="M17 17l11 11M6 11h10" /></svg>
          </button>
          <button class="inner" aria-label="북마크 추가">
            <svg viewBox="0 0 32 32" width="32" height="32" fill="none" stroke="currentColor" stroke-width="3"><path d="M16 4l3.200 8.500 9 .6-7 5.700 2.400 8.800L16 22.700l-7.600 4.900 2.400-8.800-7-5.700 9-.6z" /></svg>
          </button>
        </div>
        <button class="tool off" aria-label="확장 프로그램">
          <svg viewBox="0 0 26 12" width="26" height="12"><path d="M1 6q5-5 12-6l7 3-1 4 3 2-3 3H9l3-3-6 2-4-1 6-4z" fill="#000" /><path d="M23 9h3v2h-3z" fill="#000" /></svg>
          <span>Off</span>
        </button>
        <button class="tool" aria-label="확장 프로그램 목록">
          <svg viewBox="0 0 36 38" width="36" height="38" fill="none" stroke="currentColor" stroke-width="3">
            <path d="M4 7h26v27H4v-8q4-1 4-5t-4-5z" stroke-linejoin="round" />
            <path d="M12 6q1-4 5-4t5 4zM31 15q4 1 4 5t-4 5z" fill="currentColor" stroke="none" />
          </svg>
        </button>
        <span class="rule"></span>
        <button class="tool" aria-label="측면 패널">
          <svg viewBox="0 0 32 30" width="32" height="30"><path d="M4 0h24q4 0 4 4v22q0 4-4 4H4q-4 0-4-4V4q0-4 4-4zM4 4v22h15V4z" fill="currentColor" fill-rule="evenodd" /></svg>
        </button>
        <button class="tool"><span class="avatar">현석</span></button>
        <button class="tool" aria-label="메뉴">
          <svg viewBox="0 0 6 32" width="6" height="32" fill="currentColor"><circle cx="3" cy="4" r="3" /><circle cx="3" cy="16" r="3" /><circle cx="3" cy="28" r="3" /></svg>
        </button>
      </div>
    </div>

    <section class="page">
      <button>알림창 여는 버튼</button>
      <button>로그인</button>
      <button>비밀번호</button>
      <svg class="cursor" viewBox="0 0 30 46" width="30" height="46">
        <path d="M3 4v29l7-6 5 12 6-3-5-11h9z" fill="#000" stroke="#fff" stroke-width="3" />
      </svg>
    </section>
  </main>

  <footer class="dock">
    {#each apps as app (app)}
      <button class="app" class:running={running.includes(app)} aria-label={app}>
        {@render appArt(app)}
      </button>
    {/each}
    <span class="dock-rule"></span>
    {#each files as file (file)}
      <button class="app file" aria-label={file}>
        {@render fileArt(file)}
      </button>
    {/each}
  </footer>
</div>

<style>
  :global(body) {
    background: #0b0224;
  }

  .defs {
    position: absolute;
  }

  svg {
    display: block;
    flex-shrink: 0;
  }

  button {
    display: flex;
    align-items: center;
    justify-content: center;
    padding: 0;
    border: 0;
    background: none;
    color: inherit;
    font: inherit;
    white-space: nowrap;
  }

  .desktop {
    display: flex;
    flex-direction: column;
    min-height: 100vh;
    background: linear-gradient(90deg, #10022e 0, #0a0224 20%, #10003c 60%, #14004a 66%, #3f0060 70%, #3a0062 78%, #1b0050 90%, #14003f 100%);
    font-family: Inter, "Noto Sans CJK KR", sans-serif;
  }

  .menubar {
    display: flex;
    align-items: center;
    height: 74px;
    padding: 0 33px 0 41px;
    background: linear-gradient(90deg, #4b0f93 0, #43109c 18%, #390aae 36%, #3208ae 60%, #2d059f 85%, #280592 100%);
    color: #fff;
    font-size: 25px;
    font-weight: 500;
    line-height: 32px;
    text-shadow: 0 2px 4px rgba(0, 0, 0, 0.3);
  }

  .menus {
    display: flex;
    align-items: center;
    gap: 40px;
    margin-right: auto;
  }

  .app-name {
    font-size: 26px;
    font-weight: 700;
  }

  .status {
    display: flex;
    align-items: center;
    gap: 41px;
    color: #ebe4f9;
  }

  .status.late {
    gap: 29px;
    margin-left: 29px;
    font-size: 26px;
  }

  .battery {
    display: flex;
    align-items: center;
    gap: 8px;
    font-size: 21px;
  }

  .siri {
    width: 28px;
    height: 28px;
    border-radius: 50%;
    background:
      radial-gradient(circle, #fff 0, rgba(255, 255, 255, 0) 45%),
      conic-gradient(#2a8d70, #2fae9e 20%, #1f7fd6 35%, #152d80 50%, #7c3aa0 65%, #ee4777 78%, #2a5a50 92%, #2a8d70);
  }

  .sliver {
    height: 2px;
    background: linear-gradient(90deg, #2a0a50 0 7%, #4a0f5e 14% 16.600%, #c9c9d6 16.600% 19.200%, #4e1060 19.200% 22.500%, #180080 22.500% 62%, #c9c9d6 62% 64%, #10005a 64%);
  }

  .window {
    display: flex;
    flex: 1;
    flex-direction: column;
    overflow: hidden;
    border-radius: 20px 20px 24px 24px;
    background: #fff;
  }

  .chrome {
    overflow: hidden;
    border: 2px solid #5c5c5e;
    border-top-color: #747476;
    border-bottom-color: #4c4c4c;
    border-radius: 20px 20px 0 0;
    background: #202020;
  }

  .strip {
    display: flex;
    height: 68px;
    padding: 10px 10px 0 40px;
  }

  .lights {
    display: flex;
    align-items: center;
    gap: 16px;
    height: 58px;
    margin-right: 40px;
  }

  .light {
    width: 24px;
    height: 24px;
    border-radius: 50%;
  }

  .red {
    background: #ff5f57;
  }

  .yellow {
    background: #febc2e;
  }

  .green {
    background: #28c840;
  }

  .tabs {
    display: flex;
    flex: 0 1 2606px;
    min-width: 0;
  }

  .tab {
    position: relative;
    display: flex;
    flex: 1 1 0;
    align-items: center;
    min-width: 0;
    height: 56px;
    padding: 0 30px 12px 16px;
    color: #c7c7c7;
    font-size: 24px;
    line-height: 32px;
  }

  .tab > :global(svg) {
    z-index: 1;
  }

  .title {
    z-index: 1;
    flex: 1;
    justify-content: flex-start;
    min-width: 0;
    margin: 0 16px;
    overflow: hidden;
  }

  .title.faded {
    mask-image: linear-gradient(90deg, #000 64%, transparent 100%);
  }

  .close {
    z-index: 1;
    width: 28px;
    height: 32px;
  }

  .tab.divider::after {
    position: absolute;
    top: 13px;
    right: 4px;
    width: 2px;
    height: 32px;
    background: #414141;
    content: '';
  }

  .tab.active {
    color: #e6e6e6;
  }

  .tab.active::before {
    position: absolute;
    inset: 0 12px 0 0;
    border-radius: 20px 20px 0 0;
    background: #3b3b3b;
    content: '';
  }

  .tab.active::after {
    position: absolute;
    right: -8px;
    bottom: 0;
    left: -20px;
    height: 20px;
    background:
      radial-gradient(circle at 0 0, transparent 20px, #3b3b3b 20px) 0 0 / 20px 20px no-repeat,
      radial-gradient(circle at 100% 0, transparent 20px, #3b3b3b 20px) 100% 0 / 20px 20px no-repeat;
    content: '';
  }

  .new-tab {
    width: 56px;
    height: 56px;
  }

  .tab-search {
    width: 56px;
    height: 56px;
    margin-left: auto;
    border-radius: 18px;
    background: #3b3b3b;
  }

  .toolbar {
    display: flex;
    align-items: center;
    gap: 16px;
    height: 92px;
    padding: 0 14px;
    border-radius: 14px 14px 0 0;
    background: #3b3b3b;
    color: #c7c7c7;
  }

  .tool {
    flex-shrink: 0;
    width: 56px;
    height: 56px;
  }

  .dim {
    color: #7c7c7c;
  }

  .omnibox {
    display: flex;
    flex: 1;
    align-items: center;
    gap: 16px;
    height: 68px;
    margin: 0 8px;
    padding: 0 24px 0 10px;
    border-radius: 34px;
    background: #282828;
    font-size: 29px;
    line-height: 36px;
  }

  .site,
  .inner {
    width: 48px;
    height: 48px;
  }

  .site {
    border-radius: 50%;
    background: #3b3b3b;
  }

  .url {
    flex: 1;
    color: #c7c7c7;
    text-decoration: none;
  }

  .url b {
    color: #e6e6e6;
    font-weight: 400;
  }

  .off {
    flex-direction: column;
    padding-top: 16px;
    color: #fff;
    font-size: 18px;
    font-weight: 700;
    line-height: 28px;
  }

  .off span {
    padding: 0 5px;
    border-radius: 6px;
    background: #282828;
  }

  .rule {
    width: 2px;
    height: 32px;
    margin: 0 8px;
    background: #5f5f5f;
  }

  .avatar {
    width: 40px;
    border-radius: 50%;
    background: #5c4033;
    color: #fff;
    font-size: 16px;
    line-height: 40px;
  }

  .page {
    display: flex;
    flex: 1;
    align-items: flex-start;
    gap: 6px;
    position: relative;
    padding: 12px;
  }

  .page button {
    height: 33px;
    padding: 0 10px;
    border: 1px solid #6b6b6b;
    border-radius: 4px;
    background: #efefef;
    color: #000;
    font-size: 19px;
    line-height: 28px;
  }

  .cursor {
    position: absolute;
    top: 185px;
    left: 353px;
    filter: drop-shadow(0 3px 3px rgba(0, 0, 0, 0.35));
  }

  .dock {
    position: relative;
    display: grid;
    grid-template-columns: repeat(33, minmax(0, 1fr)) 32px repeat(6, minmax(0, 1fr));
    height: 88px;
    margin: 2px 57px 10px;
    padding: 0 3px;
    border: 2px solid rgba(255, 255, 255, 0.18);
    border-radius: 26px;
    background: linear-gradient(90deg, #1c122c 0, #1d1134 45%, #22113c 60%, #3c1152 70%, #35104f 77%, #241040 86%, #1d0c3a 100%);
    background-clip: padding-box;
    box-shadow: 0 0 110px rgba(0, 0, 0, 0.28);
  }

  .app {
    position: relative;
    align-items: flex-start;
    padding-top: 13px;
  }

  .app.file {
    padding-top: 6px;
  }

  .app.running::after {
    position: absolute;
    bottom: 2px;
    width: 8px;
    height: 8px;
    border-radius: 50%;
    background: #a896c0;
    content: '';
  }

  .badge {
    position: absolute;
    top: 3px;
    right: 0;
    width: 26px;
    border-radius: 50%;
    background: #f23b36;
    color: #fff;
    font-size: 18px;
    line-height: 26px;
    text-align: center;
  }

  .mini {
    position: absolute;
    top: 51px;
    right: 5px;
    width: 21px;
    height: 21px;
  }

  .mini :global(svg) {
    width: 100%;
    height: 100%;
  }

  .mini.stripes {
    border-radius: 5px;
    background: linear-gradient(135deg, #2b282d 30%, #f9a52f 30% 38%, #dc2f80 38% 56%, #8638a8 56% 72%, #2b282d 72%);
  }

  .dock-rule {
    justify-self: center;
    width: 2px;
    height: 68px;
    margin-top: 10px;
    background: #5b4a72;
  }
</style>
